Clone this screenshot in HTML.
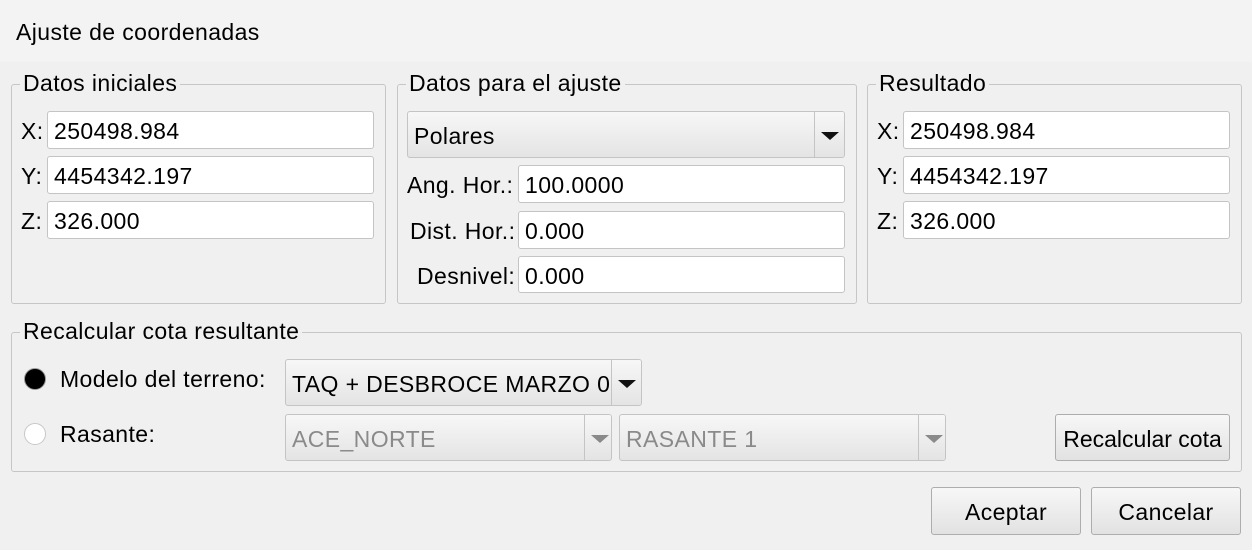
<!DOCTYPE html><html><head><style>
body{margin:0;width:1252px;height:550px;overflow:hidden;background:#f0f0f0;font-family:"Liberation Sans","DejaVu Sans",sans-serif;font-size:23px;letter-spacing:0.4px;color:#000;position:relative}
div{position:absolute;box-sizing:border-box}
.t{white-space:nowrap;line-height:1}
.gb{border:1px solid #c6c6c6;border-radius:3px}
.lg{background:#f0f0f0;padding:0 3px;top:-13px;left:8px}
.in{background:#fff;border:1px solid #c4c4c4;border-radius:3px;padding:8px 0 0 6px;white-space:nowrap;line-height:1}
.cb{border:1px solid #c4c4c4;border-radius:3px;background:linear-gradient(#f7f7f7,#e4e4e4);padding:0 0 0 6px;white-space:nowrap;overflow:hidden;line-height:1}
.ar{position:absolute;right:0;top:0;bottom:0;width:30px;border-left:1px solid #c4c4c4;background:linear-gradient(#f7f7f7,#e4e4e4)}
.ar:after{content:"";position:absolute;left:6px;top:50%;margin-top:-3px;border:9px solid transparent;border-top:8px solid #111;border-bottom:0}
.dis .ar:after{border-top-color:#8a8a8a}
.bt{border:1px solid #adadad;border-radius:3px;background:linear-gradient(#f7f7f7,#e2e2e2);text-align:center;padding-top:13px}
</style></head><body>
<div style="left:0;top:0;width:1252px;height:62px;background:#f3f3f3"></div>
<div class="t" style="left:16px;top:21px">Ajuste de coordenadas</div>

<div class="gb" style="left:11px;top:84px;width:375px;height:220px"><div class="t lg">Datos iniciales</div></div>
<div class="gb" style="left:397px;top:84px;width:460px;height:220px"><div class="t lg">Datos para el ajuste</div></div>
<div class="gb" style="left:867px;top:84px;width:375px;height:220px"><div class="t lg">Resultado</div></div>
<div class="gb" style="left:11px;top:332px;width:1231px;height:140px"><div class="t lg">Recalcular cota resultante</div></div>

<div class="t" style="left:21px;top:120px">X:</div><div class="in" style="left:47px;top:111px;width:327px;height:38px">250498.984</div>
<div class="t" style="left:21px;top:165px">Y:</div><div class="in" style="left:47px;top:156px;width:327px;height:38px">4454342.197</div>
<div class="t" style="left:21px;top:210px">Z:</div><div class="in" style="left:47px;top:201px;width:327px;height:38px">326.000</div>

<div class="cb" style="left:407px;top:111px;width:438px;height:47px;padding-top:13px">Polares<div class="ar"></div></div>
<div class="t" style="left:407px;top:174px">Ang. Hor.:</div><div class="in" style="left:518px;top:165px;width:327px;height:38px">100.0000</div>
<div class="t" style="left:410px;top:220px">Dist. Hor.:</div><div class="in" style="left:518px;top:211px;width:327px;height:38px">0.000</div>
<div class="t" style="left:417px;top:265px">Desnivel:</div><div class="in" style="left:518px;top:256px;width:327px;height:37px">0.000</div>

<div class="t" style="left:877px;top:120px">X:</div><div class="in" style="left:903px;top:111px;width:327px;height:38px">250498.984</div>
<div class="t" style="left:877px;top:165px">Y:</div><div class="in" style="left:903px;top:156px;width:327px;height:38px">4454342.197</div>
<div class="t" style="left:877px;top:210px">Z:</div><div class="in" style="left:903px;top:201px;width:327px;height:38px">326.000</div>

<div style="left:24px;top:368px;width:22px;height:22px;border-radius:50%;background:#000;border:1px solid #999"></div>
<div class="t" style="left:60px;top:368px">Modelo del terreno:</div>
<div class="cb" style="left:285px;top:359px;width:357px;height:47px;padding-top:13px">TAQ + DESBROCE MARZO 09<div class="ar"></div></div>
<div style="left:24px;top:423px;width:22px;height:22px;border-radius:50%;background:#fff;border:1px solid #c8c8c8"></div>
<div class="t" style="left:60px;top:423px">Rasante:</div>
<div class="cb dis" style="left:285px;top:414px;width:327px;height:47px;padding-top:13px;color:#8a8a8a">ACE_NORTE<div class="ar" style="width:27px"></div></div>
<div class="cb dis" style="left:619px;top:414px;width:327px;height:47px;padding-top:13px;color:#8a8a8a">RASANTE 1<div class="ar" style="width:27px"></div></div>
<div class="bt t" style="left:1055px;top:414px;width:175px;height:47px;letter-spacing:0">Recalcular cota</div>
<div class="bt t" style="left:931px;top:487px;width:150px;height:48px">Aceptar</div>
<div class="bt t" style="left:1091px;top:487px;width:150px;height:48px">Cancelar</div>
</body></html>
